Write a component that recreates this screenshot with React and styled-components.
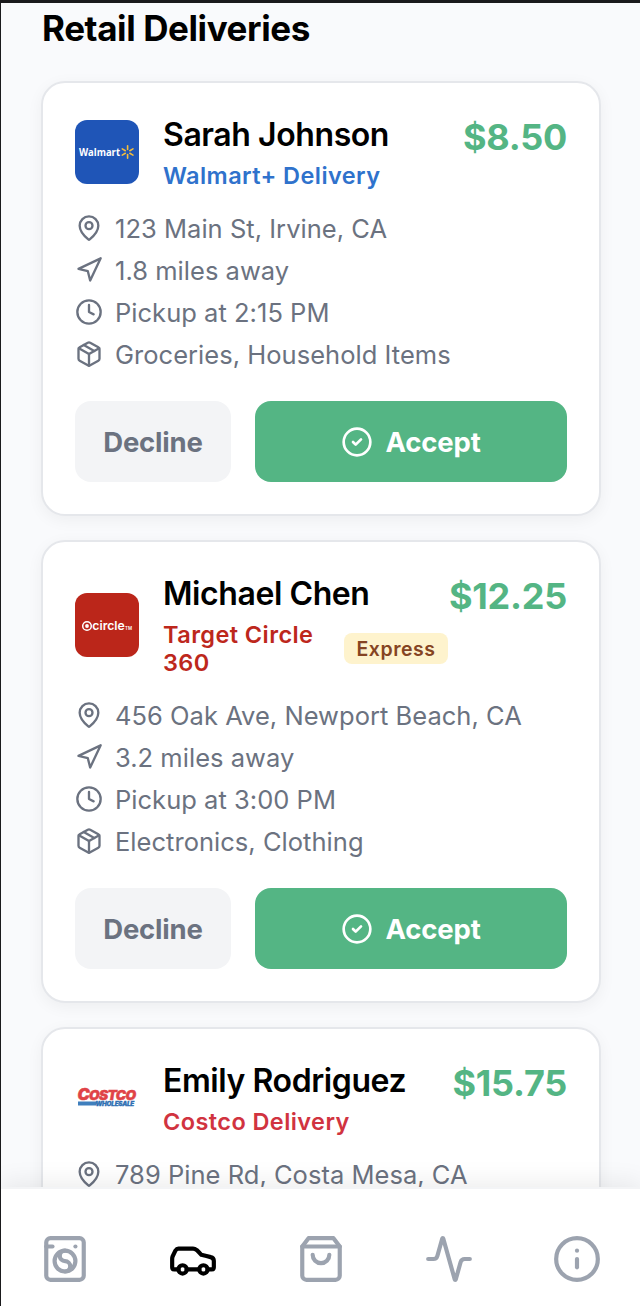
import React from "react"
import styled, { createGlobalStyle } from "styled-components"
import {
  Activity,
  Car,
  CircleCheck,
  Clock,
  Info,
  MapPin,
  Navigation,
  Package,
  WashingMachine,
} from "lucide-react"

const GlobalStyle = createGlobalStyle`
  * {
    box-sizing: border-box;
  }
  body {
    margin: 0;
    overflow: hidden;
    font-family: Inter, "Liberation Sans", sans-serif;
  }
`

const Screen = styled.div`
  display: flex;
  flex-direction: column;
  width: 641px;
  height: 1306px;
  border-top: 3px solid #1a1a1c;
  border-left: 1px solid #1a1a1c;
  background-color: #f9fafc;
  overflow: hidden;
`
const Content = styled.main`
  flex: 1;
  min-height: 0;
  padding: 0 40px;
  overflow: hidden;
`
const Title = styled.h1`
  margin: 0 0 30px;
  padding-left: 1px;
  height: 48px;
  font-size: 35px;
  font-weight: 700;
  line-height: 50px;
  letter-spacing: -0.4px;
  white-space: nowrap;
  color: #000;
`
const Card = styled.article`
  margin-bottom: 24px;
  padding: 32px;
  border: 2px solid #e5e7eb;
  border-radius: 24px;
  background-color: #fff;
  box-shadow: 0 4px 16px rgba(0, 0, 0, 0.05);
`
const Header = styled.div`
  display: flex;
  align-items: center;
  margin-bottom: 24px;
`
const Logo = styled.div`
  display: flex;
  align-items: center;
  justify-content: center;
  flex: none;
  width: 64px;
  height: 64px;
  margin-right: 24px;
  border-radius: 12px;
  background-color: ${({ $color }) => $color};
`
const Customer = styled.div`
  flex: 1;
  min-width: 0;
`
const Name = styled.h2`
  margin: 0 0 6px;
  font-size: 32px;
  font-weight: 600;
  line-height: 40px;
  letter-spacing: -0.42px;
  white-space: nowrap;
  color: #000;
`
const ServiceRow = styled.div`
  display: flex;
  align-items: center;
  gap: 16px;
  padding-right: 1px;
`
const Service = styled.div`
  padding-top: 1px;
  margin-bottom: -1px;
  font-size: 23.5px;
  font-weight: 600;
  line-height: 28px;
  letter-spacing: 0.42px;
  color: ${({ $color }) => $color};
`
const Badge = styled.span`
  flex: none;
  width: 104px;
  height: 31px;
  border-radius: 8px;
  background-color: #fef3cd;
  color: #854422;
  font-size: 19.5px;
  font-weight: 600;
  line-height: 32px;
  letter-spacing: 0.55px;
  text-align: center;
`
const Price = styled.div`
  align-self: flex-start;
  font-size: 36px;
  font-weight: 700;
  line-height: 44px;
  letter-spacing: -0.25px;
  color: #54b584;
`
const Details = styled.ul`
  display: flex;
  flex-direction: column;
  gap: 12px;
  margin: 0 0 32px;
  padding: 0;
  list-style: none;
`
const Detail = styled.li`
  display: flex;
  align-items: center;
  gap: 12px;
  height: 30px;
  font-size: 25.5px;
  line-height: 30px;
  letter-spacing: 0.03px;
  white-space: nowrap;
  color: #6b7280;

  svg {
    flex: none;
  }
  span {
    padding-top: 2px;
  }
`
const Actions = styled.div`
  display: flex;
  gap: 24px;
`
const Button = styled.button`
  display: flex;
  align-items: center;
  justify-content: center;
  gap: 12px;
  flex: ${({ $primary }) => ($primary ? 2 : 1)} 1 0;
  height: 81px;
  padding: 0;
  border: 0;
  border-radius: 16px;
  background-color: ${({ $primary }) => ($primary ? "#54b584" : "#f3f4f6")};
  color: ${({ $primary }) => ($primary ? "#fff" : "#6b7280")};
  font-family: inherit;
  font-size: 27.5px;
  font-weight: 700;
  letter-spacing: ${({ $primary }) => ($primary ? "-0.15px" : "-0.2px")};
`
const TabBar = styled.nav`
  position: relative;
  display: flex;
  flex: none;
  height: 119px;
  padding-top: 45px;
  border-top: 2px solid #f3f4f6;
  background-color: #fff;
  box-shadow: 0 -4px 24px rgba(0, 0, 0, 0.08);
`
const Tab = styled.a`
  display: flex;
  flex: 1;
  justify-content: center;
  color: ${({ $active }) => ($active ? "#000" : "#9ca3af")};
`

const WalmartLogo = () => (
  <svg width="64" height="64" viewBox="0 0 64 64">
    <text
      x="4"
      y="35.8"
      textLength="41"
      lengthAdjust="spacingAndGlyphs"
      fontFamily="Open Sans"
      fontSize="10.5"
      fontWeight="700"
      fill="#fff"
    >
      Walmart
    </text>
    <g stroke="#f5bd3a" strokeWidth="1.6" strokeLinecap="round">
      {[0, 60, 120, 180, 240, 300].map(angle => (
        <path
          key={angle}
          d="M52.6 29.4v-3.6"
          transform={`rotate(${angle} 52.6 32)`}
        />
      ))}
    </g>
  </svg>
)

const CircleLogo = () => (
  <svg width="64" height="64" viewBox="0 0 64 64" fill="#fff">
    <circle cx="12" cy="33" r="4.3" fill="none" stroke="#fff" strokeWidth="1.5" />
    <circle cx="12" cy="33" r="1.9" />
    <text
      x="17.3"
      y="36.6"
      textLength="32.5"
      lengthAdjust="spacingAndGlyphs"
      fontFamily="Inter"
      fontSize="12"
      fontWeight="600"
    >
      circle
    </text>
    <text
      x="50"
      y="36.6"
      textLength="7"
      lengthAdjust="spacingAndGlyphs"
      fontFamily="Inter"
      fontSize="5"
      fontWeight="600"
    >
      TM
    </text>
  </svg>
)

const CostcoLogo = () => (
  <svg
    width="64"
    height="64"
    viewBox="0 0 64 64"
    fontFamily="Inter"
    fontWeight="900"
    fontStyle="italic"
  >
    <text
      x="2.5"
      y="34.2"
      fontSize="15.5"
      letterSpacing="-0.6"
      textLength="58"
      lengthAdjust="spacingAndGlyphs"
      fill="#e04347"
      stroke="#e04347"
      strokeWidth="0.5"
    >
      C<tspan fontSize="13">OSTCO</tspan>
    </text>
    <path d="M3 35.4h19.5l-1.5 4.2H3z" fill="#3f7fbd" />
    <text
      x="20.5"
      y="39.5"
      fontSize="5.6"
      letterSpacing="-0.2"
      textLength="38.5"
      lengthAdjust="spacingAndGlyphs"
      fill="#2f70b3"
      stroke="#2f70b3"
      strokeWidth="0.3"
    >
      WHOLESALE
    </text>
  </svg>
)

const ShoppingBag = ({ size }) => (
  <svg
    width={size}
    height={size}
    viewBox="0 0 24 24"
    fill="none"
    stroke="currentColor"
    strokeWidth="2"
    strokeLinecap="round"
    strokeLinejoin="round"
  >
    <path d="M6 2 3 6v14a2 2 0 0 0 2 2h14a2 2 0 0 0 2-2V6l-3-4Z" />
    <path d="M3 6h18" />
    <path d="M16 10a4 4 0 0 1-8 0" />
  </svg>
)

const deliveries = [
  {
    name: "Sarah Johnson",
    service: "Walmart+ Delivery",
    color: "#2f72cc",
    logo: WalmartLogo,
    logoColor: "#1f55b7",
    price: "$8.50",
    details: [
      [MapPin, "123 Main St, Irvine, CA"],
      [Navigation, "1.8 miles away"],
      [Clock, "Pickup at 2:15 PM"],
      [Package, "Groceries, Household Items"],
    ],
  },
  {
    name: "Michael Chen",
    service: "Target Circle 360",
    color: "#bd271c",
    logo: CircleLogo,
    logoColor: "#bb261a",
    express: true,
    price: "$12.25",
    details: [
      [MapPin, "456 Oak Ave, Newport Beach, CA"],
      [Navigation, "3.2 miles away"],
      [Clock, "Pickup at 3:00 PM"],
      [Package, "Electronics, Clothing"],
    ],
  },
  {
    name: "Emily Rodriguez",
    service: "Costco Delivery",
    color: "#d13340",
    logo: CostcoLogo,
    logoColor: "#fff",
    price: "$15.75",
    details: [[MapPin, "789 Pine Rd, Costa Mesa, CA"]],
  },
]

const tabs = [
  { name: "laundry", icon: WashingMachine },
  { name: "rides", icon: Car, active: true },
  { name: "retail", icon: ShoppingBag },
  { name: "activity", icon: Activity },
  { name: "info", icon: Info },
]

const DeliveryCard = ({ delivery }) => {
  const BrandLogo = delivery.logo
  return (
    <Card>
      <Header>
        <Logo $color={delivery.logoColor}>
          <BrandLogo />
        </Logo>
        <Customer>
          <Name>{delivery.name}</Name>
          <ServiceRow>
            <Service $color={delivery.color}>{delivery.service}</Service>
            {delivery.express && <Badge>Express</Badge>}
          </ServiceRow>
        </Customer>
        <Price>{delivery.price}</Price>
      </Header>

      <Details>
        {delivery.details.map(([Icon, text]) => (
          <Detail key={text}>
            <Icon size={28} />
            <span>{text}</span>
          </Detail>
        ))}
      </Details>

      <Actions>
        <Button>Decline</Button>
        <Button $primary>
          <CircleCheck size={32} />
          Accept
        </Button>
      </Actions>
    </Card>
  )
}

const App = () => (
  <>
    <GlobalStyle />
    <Screen>
      <Content>
        <Title>Retail Deliveries</Title>
        {deliveries.map(delivery => (
          <DeliveryCard key={delivery.name} delivery={delivery} />
        ))}
      </Content>
      <TabBar>
        {tabs.map(({ name, icon: Icon, active }) => (
          <Tab key={name} $active={active}>
            <Icon size={50} />
          </Tab>
        ))}
      </TabBar>
    </Screen>
  </>
)

export default App
